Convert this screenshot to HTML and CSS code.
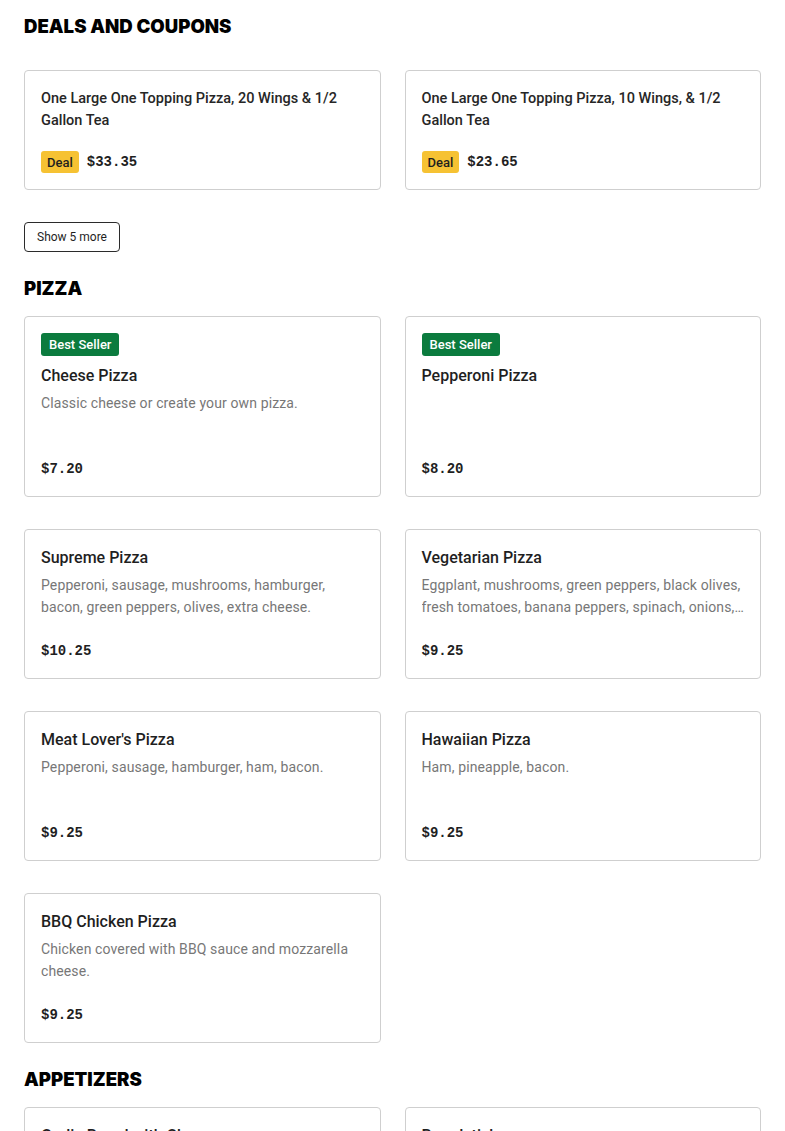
FILE: index.html
```html
<!DOCTYPE html>
<html lang="en">
<head>
<meta charset="utf-8">
<title>Menu</title>
<link rel="stylesheet" href="styles.css">
</head>
<body>
<main class="page">
  <section class="section">
    <h2 class="section-title section-title--deals">DEALS AND COUPONS</h2>
    <div class="grid">
      <div class="card deal">
        <div class="deal-title">One Large One Topping Pizza, 20 Wings &amp; 1/2 Gallon Tea</div>
        <div class="deal-foot"><span class="badge badge--deal">Deal</span><span class="price">$33.35</span></div>
      </div>
      <div class="card deal">
        <div class="deal-title">One Large One Topping Pizza, 10 Wings, &amp; 1/2 Gallon Tea</div>
        <div class="deal-foot"><span class="badge badge--deal">Deal</span><span class="price">$23.65</span></div>
      </div>
    </div>
    <button class="more">Show 5 more</button>
  </section>

  <section class="section">
    <h2 class="section-title">PIZZA</h2>
    <div class="grid">
      <div class="card item">
        <span class="badge badge--best">Best Seller</span>
        <div class="item-title">Cheese Pizza</div>
        <div class="item-desc">Classic cheese or create your own pizza.</div>
        <div class="price">$7.20</div>
      </div>
      <div class="card item">
        <span class="badge badge--best">Best Seller</span>
        <div class="item-title">Pepperoni Pizza</div>
        <div class="item-desc"></div>
        <div class="price">$8.20</div>
      </div>
      <div class="card item">
        <div class="item-title">Supreme Pizza</div>
        <div class="item-desc">Pepperoni, sausage, mushrooms, hamburger, bacon, green peppers, olives, extra cheese.</div>
        <div class="price">$10.25</div>
      </div>
      <div class="card item">
        <div class="item-title">Vegetarian Pizza</div>
        <div class="item-desc">Eggplant, mushrooms, green peppers, black olives, fresh tomatoes, banana peppers, spinach, onions, extra cheese.</div>
        <div class="price">$9.25</div>
      </div>
      <div class="card item">
        <div class="item-title">Meat Lover's Pizza</div>
        <div class="item-desc">Pepperoni, sausage, hamburger, ham, bacon.</div>
        <div class="price">$9.25</div>
      </div>
      <div class="card item">
        <div class="item-title">Hawaiian Pizza</div>
        <div class="item-desc">Ham, pineapple, bacon.</div>
        <div class="price">$9.25</div>
      </div>
      <div class="card item">
        <div class="item-title">BBQ Chicken Pizza</div>
        <div class="item-desc">Chicken covered with BBQ sauce and mozzarella cheese.</div>
        <div class="price">$9.25</div>
      </div>
    </div>
  </section>

  <section class="section">
    <h2 class="section-title">APPETIZERS</h2>
    <div class="grid">
      <div class="card item">
        <div class="item-title">Garlic Bread with Cheese</div>
        <div class="item-desc"></div>
        <div class="price">$5.25</div>
      </div>
      <div class="card item">
        <div class="item-title">Breadsticks</div>
        <div class="item-desc"></div>
        <div class="price">$4.25</div>
      </div>
    </div>
  </section>
</main>
</body>
</html>
```

FILE: styles.css
```css
html, body {
  margin: 0;
  padding: 0;
  background: #ffffff;
}

body {
  font-family: "Roboto", "Inter", "Noto Sans", sans-serif;
  color: #1f1f1f;
}

.page {
  padding: 14px 24px 40px;
}

.section {
  margin-bottom: 24px;
}

.section-title {
  margin: 0 0 16px;
  font-family: "Inter", sans-serif;
  font-weight: 900;
  font-size: 18.6px;
  line-height: 24px;
  color: #000;
}

.section-title--deals {
  margin-bottom: 32px;
}

.grid {
  display: grid;
  grid-template-columns: 1fr 1fr;
  column-gap: 24px;
  row-gap: 32px;
}

.card {
  border: 1px solid #cfcfcf;
  border-radius: 4px;
  padding: 16px;
  display: flex;
  flex-direction: column;
  align-items: flex-start;
  min-width: 0;
}

.deal-title {
  font-size: 14.5px;
  line-height: 22px;
  font-weight: 500;
  color: #262626;
  padding-top: 1px;
  margin-bottom: -1px;
}

.deal-foot {
  margin-top: 20px;
  display: flex;
  align-items: center;
  gap: 8px;
}

.badge {
  display: inline-flex;
  align-items: center;
  border-radius: 3px;
  font-size: 13px;
  font-weight: 500;
}

.badge--deal {
  height: 22px;
  padding: 0 6px;
  background: #f6c233;
  color: #1f1f1f;
}

.badge--best {
  height: 23px;
  padding: 0 8px;
  background: #0b7b3e;
  color: #ffffff;
  margin-bottom: 8px;
}

.price {
  font-family: "Liberation Mono", "DejaVu Sans Mono", monospace;
  font-weight: 700;
  font-size: 14px;
  line-height: 22px;
  color: #1f1f1f;
}

.item-title {
  font-size: 16px;
  line-height: 24px;
  font-weight: 500;
  color: #1f1f1f;
}

.item-desc {
  margin-top: 4px;
  font-size: 14px;
  letter-spacing: 0.12px;
  line-height: 22px;
  color: #777777;
  min-height: 44px;
  display: -webkit-box;
  -webkit-line-clamp: 2;
  -webkit-box-orient: vertical;
  overflow: hidden;
}

.item .price {
  margin-top: 22px;
}

.more {
  margin-top: 32px;
  height: 30px;
  padding: 0 12px;
  border: 1px solid #2b2b2b;
  border-radius: 4px;
  background: #ffffff;
  font-family: "Roboto", sans-serif;
  font-size: 12px;
  color: #1f1f1f;
  cursor: pointer;
}
```
